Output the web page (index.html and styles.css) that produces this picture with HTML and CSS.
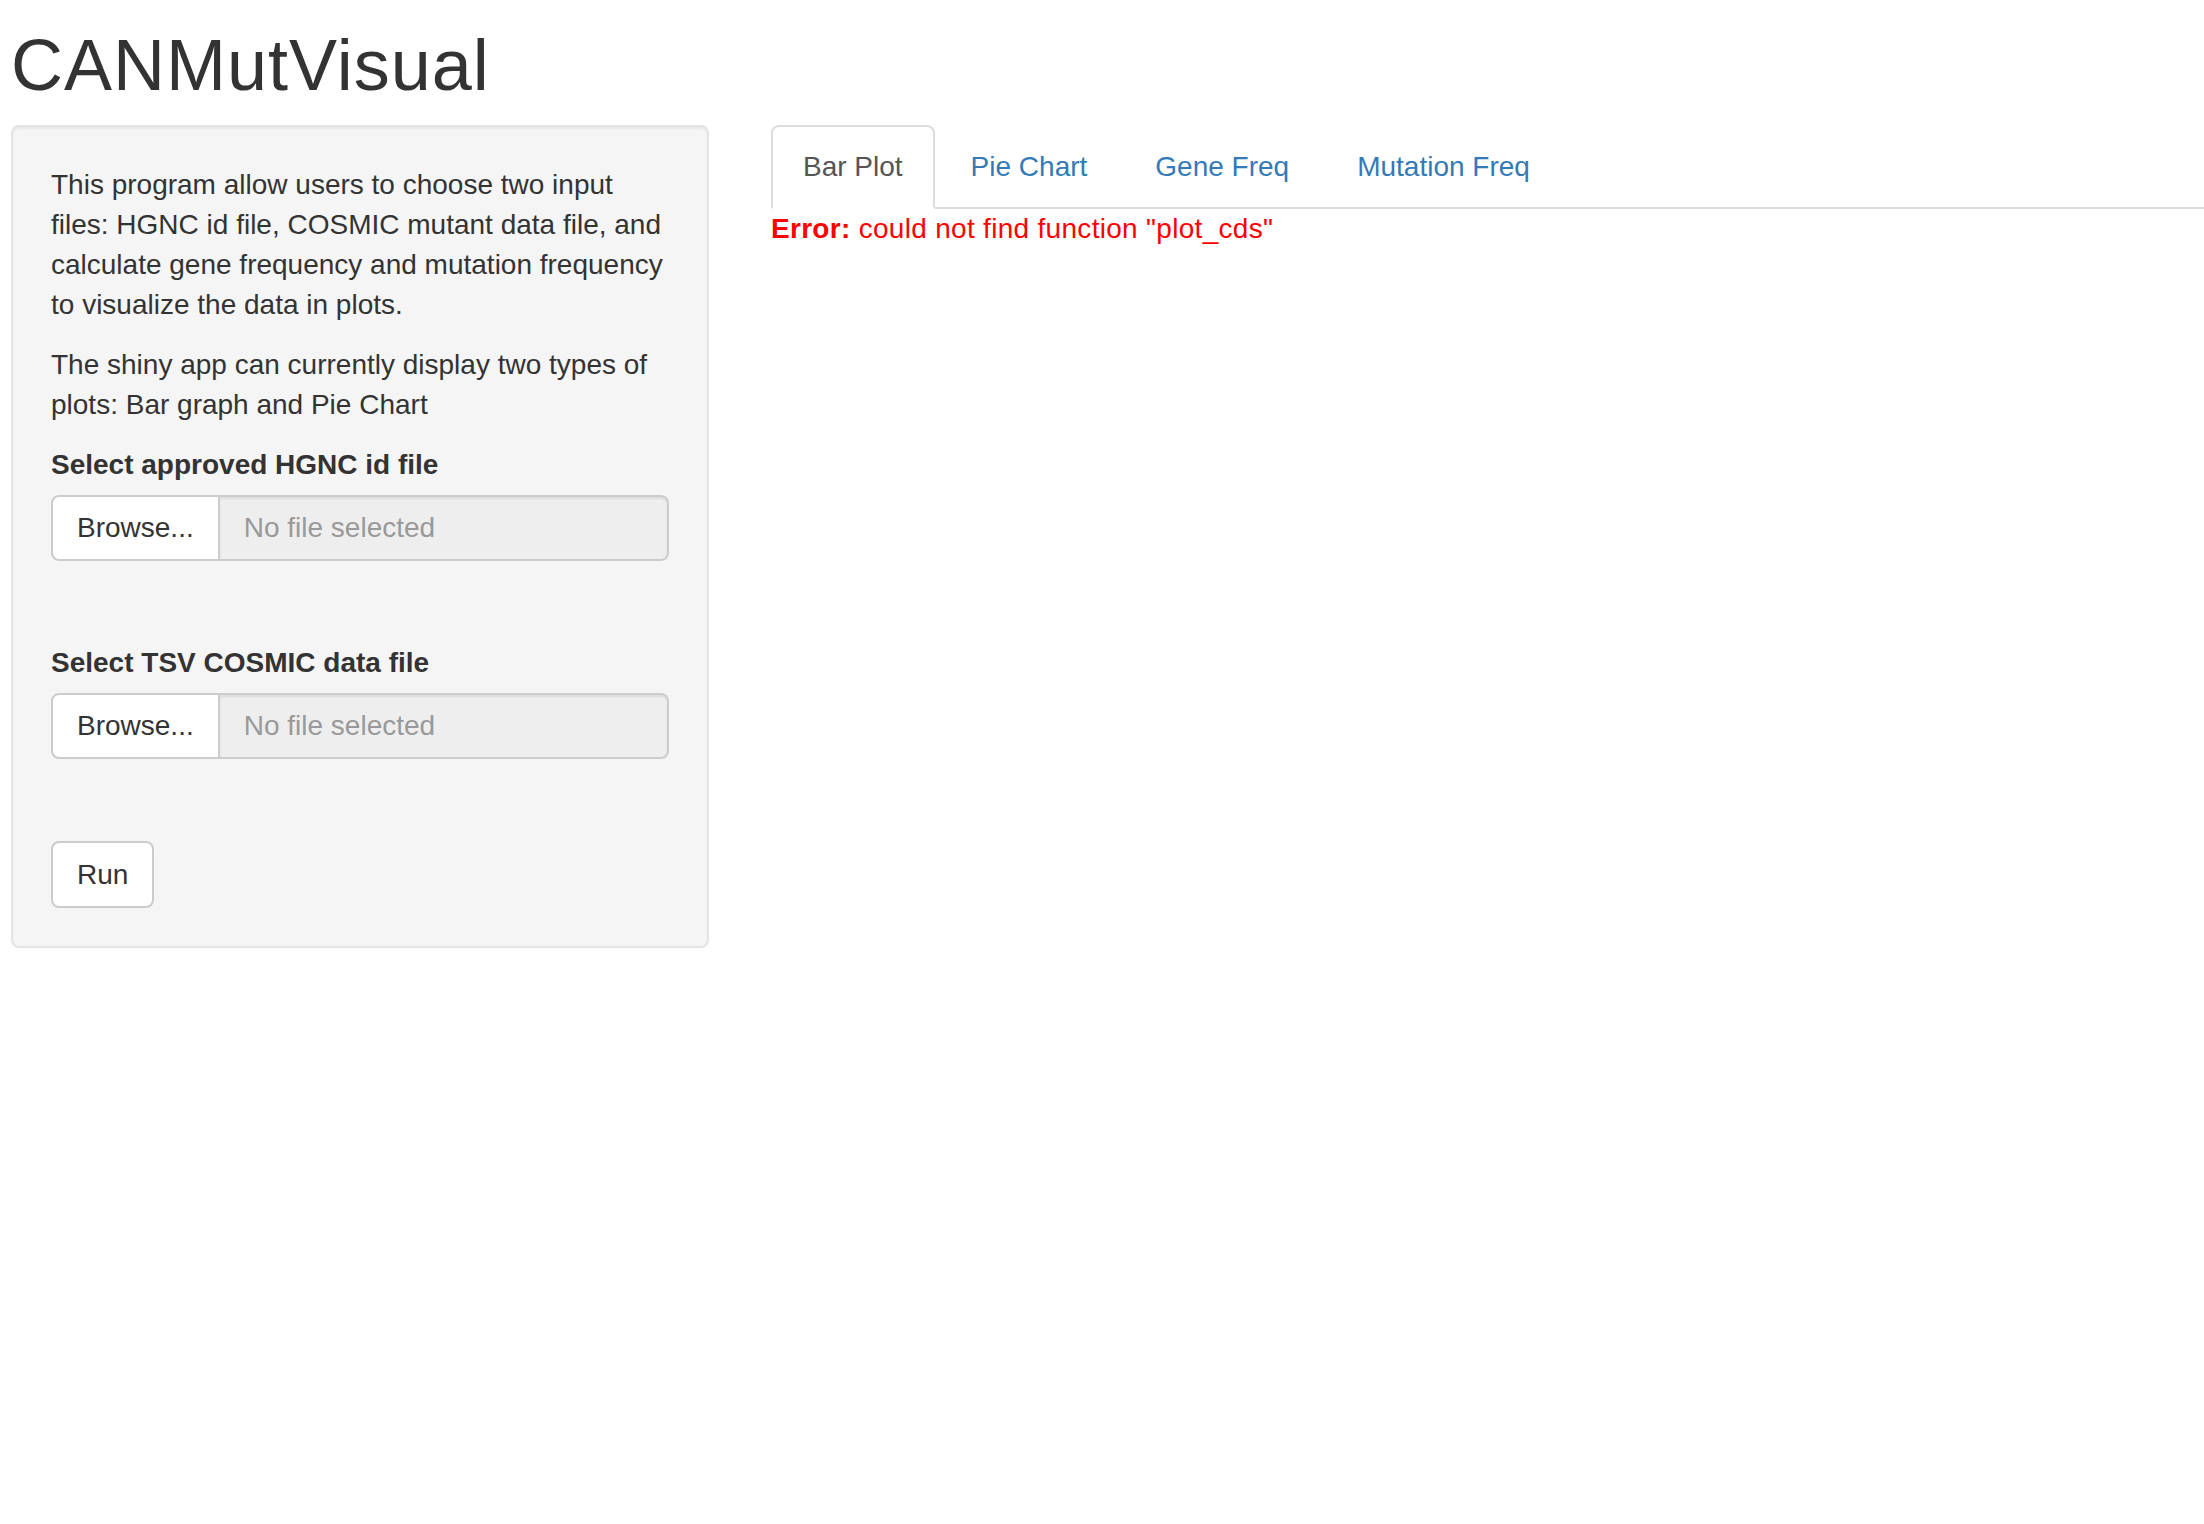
FILE: index.html
```html
<!DOCTYPE html>
<html lang="en">
<head>
<meta charset="utf-8">
<title>CANMutVisual</title>
<link rel="stylesheet" href="styles.css">
</head>
<body>
<div class="container">
  <h1 class="title">CANMutVisual</h1>
  <div class="row">
    <div class="sidebar">
      <p>This program allow users to choose two input files: HGNC id file, COSMIC mutant data file, and calculate gene frequency and mutation frequency to visualize the data in plots.</p>
      <p>The shiny app can currently display two types of plots: Bar graph and Pie Chart</p>
      <div class="form-group">
        <label class="control-label">Select approved HGNC id file</label>
        <div class="input-group">
          <span class="btn btn-browse">Browse...</span>
          <span class="form-control">No file selected</span>
        </div>
      </div>
      <div class="form-group">
        <label class="control-label">Select TSV COSMIC data file</label>
        <div class="input-group">
          <span class="btn btn-browse">Browse...</span>
          <span class="form-control">No file selected</span>
        </div>
      </div>
      <button class="btn btn-run" type="button">Run</button>
    </div>
    <div class="main">
      <ul class="nav-tabs">
        <li class="active"><a href="#">Bar Plot</a></li>
        <li><a href="#">Pie Chart</a></li>
        <li><a href="#">Gene Freq</a></li>
        <li><a href="#">Mutation Freq</a></li>
      </ul>
      <div class="tab-content">
        <div class="error"><strong>Error:</strong> could not find function "plot_cds"</div>
      </div>
    </div>
  </div>
</div>
</body>
</html>
```
FILE: styles.css
```css
html, body {
  margin: 0;
  padding: 0;
  background: #fff;
}
body {
  font-family: "Liberation Sans", Helvetica, Arial, sans-serif;
  font-size: 28px;
  line-height: 40px;
  color: #333;
}
.container {
  padding-left: 11px;
}
.title {
  margin: 26px 0 20px;
  font-size: 72px;
  line-height: 1.1;
  font-weight: normal;
  letter-spacing: 1px;
  color: #333;
}
.row {
  display: flex;
  align-items: flex-start;
  gap: 62px;
}
.sidebar {
  box-sizing: border-box;
  width: 698px;
  flex: none;
  padding: 38px;
  background: #f5f5f5;
  border: 2px solid #e3e3e3;
  border-radius: 8px;
  box-shadow: inset 0 2px 2px rgba(0, 0, 0, 0.05);
}
.sidebar p {
  margin: 0 0 20px;
}
.control-label {
  display: block;
  font-weight: bold;
  margin-bottom: 10px;
}
.form-group {
  margin-bottom: 82px;
}
.input-group {
  display: flex;
  height: 66px;
  box-sizing: border-box;
}
.btn {
  box-sizing: border-box;
  display: inline-flex;
  align-items: center;
  height: 66px;
  padding: 0 24px;
  font-family: inherit;
  font-size: 28px;
  color: #333;
  background: #fff;
  border: 2px solid #ccc;
  border-radius: 8px;
}
.btn-browse {
  border-radius: 8px 0 0 8px;
}
.form-control {
  box-sizing: border-box;
  flex: 1;
  display: flex;
  align-items: center;
  padding: 0 24px;
  background: #eee;
  color: #999;
  border: 2px solid #ccc;
  border-left: 0;
  border-radius: 0 8px 8px 0;
  box-shadow: inset 0 2px 2px rgba(0, 0, 0, 0.075);
}
.btn-run {
  height: 67px;
  cursor: pointer;
}
.main {
  flex: 1;
  min-width: 0;
}
.nav-tabs {
  display: flex;
  margin: 0;
  padding: 0;
  list-style: none;
  border-bottom: 2px solid #ddd;
}
.nav-tabs li {
  margin-bottom: -2px;
}
.nav-tabs a {
  display: block;
  padding: 20px 30px;
  margin-right: 4px;
  line-height: 40px;
  border: 2px solid transparent;
  border-radius: 8px 8px 0 0;
  color: #337ab7;
  text-decoration: none;
}
.nav-tabs li.active a {
  color: #555;
  background: #fff;
  border-color: #ddd #ddd transparent;
}
.error {
  color: red;
  letter-spacing: 0.3px;
}
.error strong {
  font-weight: bold;
}
```
